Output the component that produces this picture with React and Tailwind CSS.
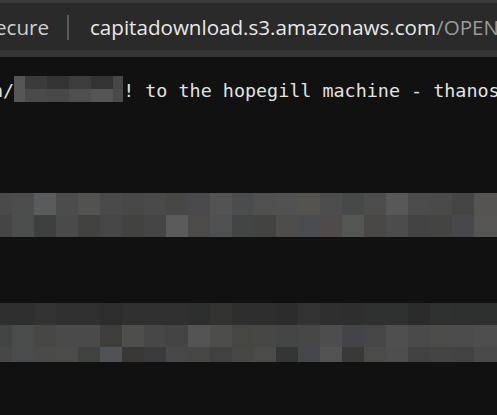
const userBlur = [
  ["#555555", "#3b3b3b", "#343434", "#3d3d3d", "#343434", "#464646"],
  ["#565656", "#4a4a4a", "#484848", "#4e4e4e", "#555555", "#4a4a4a"],
];
const userWidths = [11, 22, 22, 22, 22, 10];

const bandOne = [
  ["#4a4a4a", "#4d4d4d", "#5a5b5d", "#4c4c4c", "#525250", "#4a4a4a", "#484848", "#4a4a4a", "#474745", "#4a494c", "#535353", "#4b4c4e", "#505050", "#515251", "#545350", "#4d4d4d", "#474948", "#4d4d4d", "#585858", "#4b4b4b", "#4a4a4a", "#454545", "#555452"],
  ["#454545", "#4c4d4d", "#3e403f", "#4a4a4a", "#414140", "#464646", "#424240", "#454545", "#5a5b5a", "#4d4b4a", "#4f5052", "#434544", "#434341", "#4e4d4c", "#4b4c50", "#4f4b48", "#545654", "#4a4846", "#4c4c4c", "#434343", "#444443", "#48474b", "#555553"],
];

const bandTwo = [
  ["#2f2f2f", "#2f2f2f", "#323232", "#303030", "#303030", "#2d2d2d", "#303030", "#2f302f", "#303030", "#2d2f2f", "#323330", "#2e2e2e", "#2e2e2e", "#2c2c2c", "#323232", "#2f2f2f", "#2e2e2e", "#2f3130", "#2f3130", "#2b2b2b", "#2f3130", "#2e2f2f", "#2e3030"],
  ["#434544", "#4a4c4b", "#474745", "#4a4a4a", "#4a4a4a", "#3f3e3c", "#4e4e4c", "#474747", "#444444", "#545454", "#4d4d4b", "#464742", "#474745", "#444645", "#474747", "#4d4d4d", "#434447", "#464646", "#4f4f4f", "#4a4a4a", "#4c4c4a", "#4c4c4c", "#4e4e4e"],
  ["#474747", "#4a4b4d", "#4a4a49", "#4b4b4a", "#3f423f", "#505256", "#393836", "#3b3b3e", "#48474a", "#474745", "#414141", "#474745", "#4b4b4a", "#343635", "#45474b", "#535353", "#3a3937", "#4b4b4a", "#4e4e4e", "#424242", "#444444", "#434244", "#4a4a4a"],
];

const colWidths = [12, ...Array(22).fill(22)];

function Pixels({ rows, heights }) {
  return (
    <div className="flex flex-col">
      {rows.map((row, r) => (
        <div key={r} className="flex" style={{ height: heights[r] }}>
          {row.map((c, i) => (
            <div
              key={i}
              className="shrink-0"
              style={{ width: i === row.length - 1 ? 24 : colWidths[i], backgroundColor: c }}
            />
          ))}
        </div>
      ))}
    </div>
  );
}

export default function App() {
  return (
    <div className="w-[497px] h-[415px] overflow-hidden bg-[#111111]">
      {/* address bar */}
      <div className="h-[3px] bg-[#3b3b3b]" />
      <div
        className="h-[47px] bg-[#2a2a2a] flex items-center whitespace-nowrap text-[20.6px] pt-[2px]"
        style={{ fontFamily: '"Open Sans", sans-serif' }}
      >
        <div className="w-[49px] overflow-hidden flex justify-end shrink-0">
          <span className="text-[#cfcfcf] shrink-0">Not secure</span>
        </div>
        <div className="w-[2px] h-[25px] bg-[#5a5a5a] ml-[18px] mr-[21px] shrink-0" />
        <span className="text-[#e8e8e8]">capitadownload.s3.amazonaws.com</span>
        <span className="text-[#9a9a9a]">/OPENBUILD</span>
      </div>
      <div className="h-[7px] bg-[#353535]" />

      {/* terminal */}
      <div
        className="mt-[20px] -ml-[8px] h-[27px] flex items-start whitespace-nowrap text-[18.4px] leading-[27px] text-[#e2e2e2]"
        style={{ fontFamily: '"DejaVu Sans Mono", monospace' }}
      >
        <span className="shrink-0">n/</span>
        <div className="flex flex-col -mt-[1px] shrink-0">
          {userBlur.map((row, r) => (
            <div key={r} className="flex h-[13px]">
              {row.map((c, i) => (
                <div key={i} style={{ width: userWidths[i], backgroundColor: c }} />
              ))}
            </div>
          ))}
        </div>
        <span className="shrink-0">! to the hopegill machine - thanos</span>
      </div>

      <div className="mt-[89px]">
        <Pixels rows={bandOne} heights={[22, 22]} />
      </div>
      <div className="mt-[66px]">
        <Pixels rows={bandTwo} heights={[22, 22, 15]} />
      </div>
    </div>
  );
}
